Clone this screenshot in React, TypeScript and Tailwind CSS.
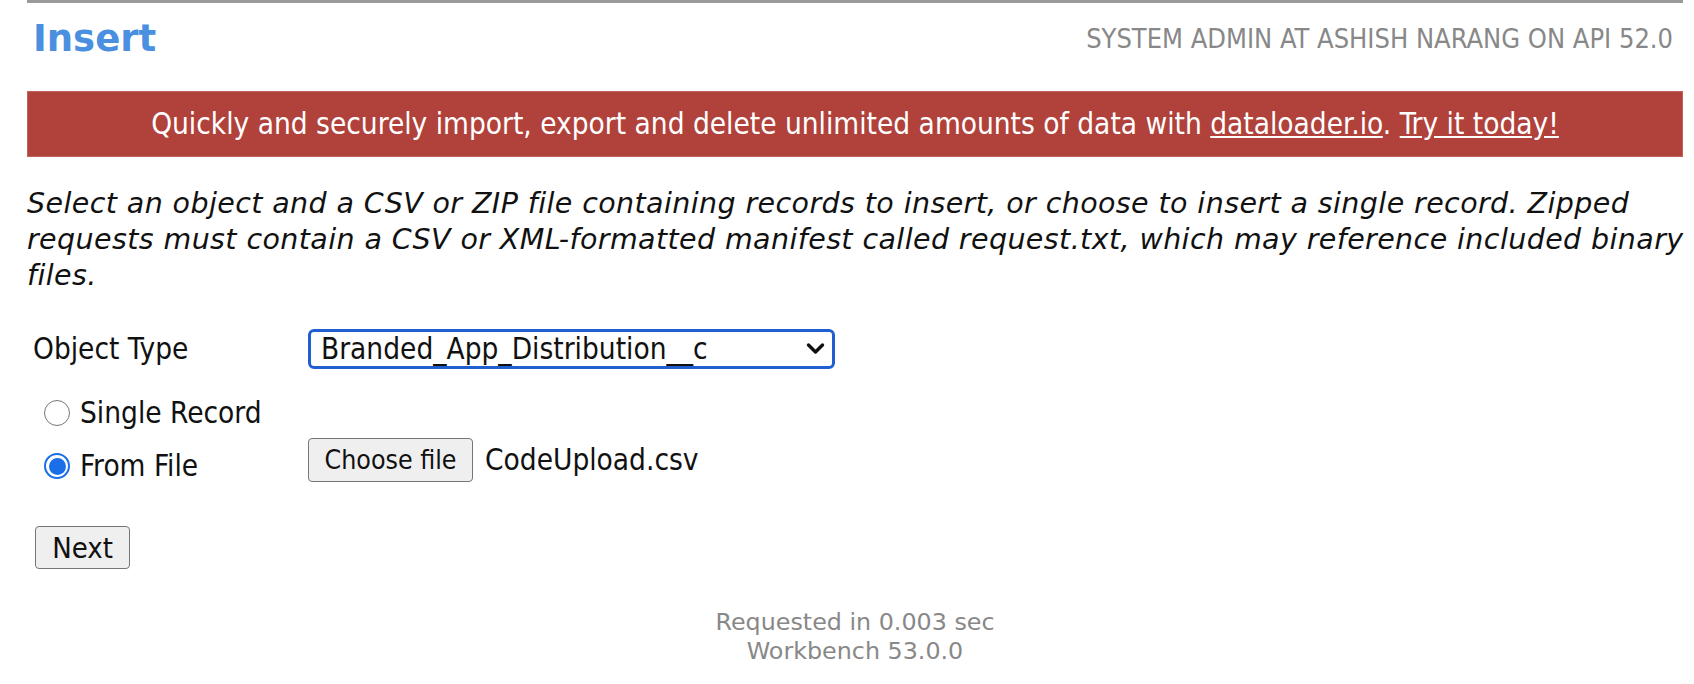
import React from 'react'

const tahoma = { fontFamily: '"DejaVu Sans Condensed", "Liberation Sans", sans-serif' }
const verdana = { fontFamily: '"DejaVu Sans", Verdana, sans-serif' }

function Chevron() {
  return (
    <svg width="19" height="14" viewBox="0 0 19 14" className="shrink-0">
      <path d="M2.5 3 L9.5 10 L16.5 3" fill="none" stroke="#111" strokeWidth="3.4" strokeLinecap="round" strokeLinejoin="round" />
    </svg>
  )
}

function Radio({ checked }: { checked?: boolean }) {
  if (checked) {
    return (
      <span className="w-[26px] h-[26px] rounded-full border-[2px] border-[#1a6fe8] bg-white flex items-center justify-center shrink-0">
        <span className="w-[17px] h-[17px] rounded-full bg-[#1a6fe8]" />
      </span>
    )
  }
  return <span className="w-[26px] h-[26px] rounded-full border border-[#767676] bg-white shrink-0" />
}

export default function App() {
  return (
    <div className="bg-white w-[1694px] h-[684px] overflow-hidden text-[#111]" style={tahoma}>
      <div className="ml-[27px] w-[1656px]">
        <div className="border-t-[3px] border-[#9a9a9a] flex items-center justify-between h-[77px] pb-[2px]">
          <h1 className="pl-[6px] text-[37px] font-bold text-[#4a8fe0]" style={verdana}>
            Insert
          </h1>
          <span className="pr-[10px] text-[27px] text-[#888]">SYSTEM ADMIN AT ASHISH NARANG ON API 52.0</span>
        </div>

        <div className="mt-[14px] h-[66px] bg-[#b0423b] border border-[#c2625b] flex items-center justify-center text-white text-[29.5px]">
          <span>
            Quickly and securely import, export and delete unlimited amounts of data with{' '}
            <a className="underline">dataloader.io</a>. <a className="underline">Try it today!</a>
          </span>
        </div>

        <p className="mt-[29px] text-[28.5px] italic leading-[36px] tracking-[0.4px] whitespace-nowrap" style={verdana}>
          Select an object and a CSV or ZIP file containing records to insert, or choose to insert a single record. Zipped
          <br />
          requests must contain a CSV or XML-formatted manifest called request.txt, which may reference included binary
          <br />
          files.
        </p>

        <div className="mt-[35px] text-[29.5px]">
          <div className="flex items-center h-[40px]">
            <span className="w-[281px] pl-[6px]">Object Type</span>
            <div className="w-[527px] h-[40px] rounded-[6px] border-[3px] border-[#1f5fd1] flex items-center justify-between pl-[10px] pr-[7px]">
              <span>Branded_App_Distribution__c</span>
              <Chevron />
            </div>
          </div>

          <div className="flex items-center h-[40px] mt-[24px] pl-[17px] gap-[10px]">
            <Radio />
            <span>Single Record</span>
          </div>

          <div className="flex items-start h-[44px] mt-[5px]">
            <div className="w-[281px] h-[40px] mt-[8px] pl-[17px] flex items-center gap-[10px]">
              <Radio checked />
              <span>From File</span>
            </div>
            <button className="h-[44px] w-[165px] bg-[#efefef] border border-[#767676] rounded-[4px] text-[26.5px]">
              Choose file
            </button>
            <span className="ml-[12px] h-[44px] flex items-center">CodeUpload.csv</span>
          </div>

          <div className="mt-[44px] pl-[8px]">
            <button className="h-[43px] w-[95px] bg-[#efefef] border border-[#767676] rounded-[4px] text-[29px]">
              Next
            </button>
          </div>
        </div>

        <div className="mt-[38px] text-center text-[#888] text-[23.8px] leading-[29px]" style={verdana}>
          <div>Requested in 0.003 sec</div>
          <div>Workbench 53.0.0</div>
        </div>
      </div>
    </div>
  )
}
